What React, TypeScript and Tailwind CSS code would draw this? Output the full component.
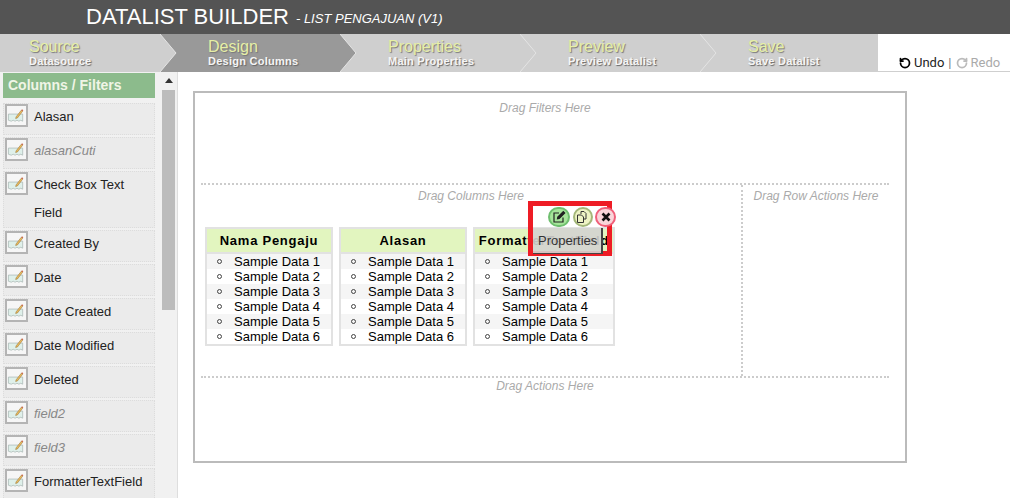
import { RotateCcw, RotateCw } from "lucide-react";

/* ---------------- Data ---------------- */

const steps = [
  { title: "Source", sub: "Datasource" },
  { title: "Design", sub: "Design Columns", active: true },
  { title: "Properties", sub: "Main Properties" },
  { title: "Preview", sub: "Preview Datalist" },
  { title: "Save", sub: "Save Datalist" },
];

const fields = [
  { label: "Alasan" },
  { label: "alasanCuti", muted: true },
  { label: "Check Box Text Field" },
  { label: "Created By" },
  { label: "Date" },
  { label: "Date Created" },
  { label: "Date Modified" },
  { label: "Deleted" },
  { label: "field2", muted: true },
  { label: "field3", muted: true },
  { label: "FormatterTextField" },
];

const samples = [1, 2, 3, 4, 5, 6];

/* ---------------- Small parts ---------------- */

function FieldIcon() {
  return (
    <span className="flex h-[23px] w-[23px] shrink-0 items-center justify-center border-2 border-[#b4b4b4] bg-[#f6f6f6]">
      <svg width="19" height="19" viewBox="0 0 20 20">
        <path d="M1.5 8.5h15v7.5l-2-1-2 1-2-1-2 1-2-1-2 1-3-1z" fill="#dff0ea" stroke="#a3b0ad" strokeWidth="0.7" />
        <path d="M9.5 11.5 15 4.5l1.4 1.1-5.4 7-1.9.6z" fill="#eab95c" stroke="#8a6a2c" strokeWidth="0.5" />
        <path d="M15 4.5l.8-1 1.4 1.1-.8 1z" fill="#c9634a" />
      </svg>
    </span>
  );
}

function StepArrow({ fill }: { fill: string }) {
  return (
    <svg className="absolute left-full top-0 z-10 h-[38px] w-[18px]" viewBox="0 0 18 38">
      <path d="M0 0 16 19 0 38z" fill={fill} />
      <path d="M0 0 16 19 0 38" fill="none" stroke="#e4e4e4" strokeWidth="1" />
    </svg>
  );
}

function SampleColumn({ title, width }: { title: string; width: string }) {
  return (
    <div className={`${width} border-2 border-[#e2e2e2] bg-white`}>
      <div className="flex h-[25px] items-center justify-center border-b-2 border-[#e2e2e2] bg-[#e2f5bf] text-[13px] font-bold tracking-[0.75px] whitespace-nowrap text-black">
        {title}
      </div>
      <ul className="text-[13px] leading-[15px] text-black">
        {samples.map((n) => (
          <li key={n} className="flex h-[15px] items-center odd:bg-[#f5f5f5]">
            <span className="ml-[10px] mr-[12px] h-[5px] w-[5px] rounded-full border border-[#444]" />
            <span>Sample Data {n}</span>
          </li>
        ))}
      </ul>
    </div>
  );
}

/* ---------------- Page ---------------- */

export default function App() {
  return (
    <div className="h-[498px] w-[1010px] overflow-hidden bg-white font-['Liberation_Sans',Arial,sans-serif]">
      {/* HEADER */}
      <header className="flex h-[34px] items-center bg-[#545454] pl-[86px] text-white">
        <span className="text-[22px] leading-none">DATALIST BUILDER</span>
        <span className="ml-[7px] pt-[3px] text-[13px] italic">- LIST PENGAJUAN (V1)</span>
      </header>

      {/* STEPS */}
      <nav className="flex h-[38px] border-b border-[#cfcfcf]">
        <div className="flex w-[878px] bg-[#cfcfcf]">
          {steps.map((s, i) => (
            <div
              key={s.title}
              className={`relative h-[38px] ${i === 0 ? "w-[160px] pl-[29px]" : "pl-[48px]"} ${i > 0 && i < 4 ? "w-[180px]" : ""} ${i === 4 ? "w-[178px]" : ""} ${s.active ? "bg-[#999999]" : ""}`}
            >
              {i < 4 && <StepArrow fill={s.active ? "#999999" : "#cfcfcf"} />}
              <div className="relative z-20 pt-[4px] text-[16px] leading-[17px] text-[#e6efa6] [text-shadow:1px_1px_1px_#777]">
                {s.title}
              </div>
              <div className="relative z-20 text-[11px] leading-[13px] font-bold tracking-[0.25px] text-[#f5f5f5] [text-shadow:1px_1px_1px_#666]">
                {s.sub}
              </div>
            </div>
          ))}
        </div>
        <div className="flex flex-1 items-end gap-[3px] pl-[21px] text-[13px] leading-[16px] font-['Roboto',sans-serif]">
          <RotateCcw size={12} strokeWidth={3.5} className="mb-[2px] text-black" />
          <span className="text-[#222]">Undo</span>
          <span className="mx-px text-[#777]">|</span>
          <RotateCw size={12} strokeWidth={3.5} className="mb-[2px] text-[#bbb]" />
          <span className="text-[#aaa]">Redo</span>
        </div>
      </nav>

      <div className="flex h-[426px]">
        {/* SIDEBAR */}
        <aside className="flex w-[178px] shrink-0 border-r border-[#dedede] bg-[#f1f1f1] pl-[3px] pt-px">
          <div className="w-[152px] shrink-0 overflow-hidden">
            <div className="mb-[5px] flex h-[25px] items-center bg-[#8cbb8c] pl-[5px] text-[14px] font-bold text-[#f0f5e6]">
              Columns / Filters
            </div>
            {fields.map((f) => (
              <div
                key={f.label}
                className={`mt-[2px] flex min-h-[32px] items-start gap-[6px] border border-dotted border-[#dcdcdc] bg-[#ebebeb] pl-px text-[13px] leading-[28px] ${f.muted ? "italic text-[#888]" : "text-[#222]"}`}
              >
                <FieldIcon />
                <span className="-mt-px w-[115px]">{f.label}</span>
              </div>
            ))}
          </div>
          <div className="ml-[7px] flex w-[13px] flex-col items-center">
            <div className="mt-[5px] h-0 w-0 border-x-[4px] border-b-[5px] border-x-transparent border-b-[#333]" />
            <div className="mt-[7px] h-[220px] w-[13px] bg-[#bcbcbc]" />
          </div>
        </aside>

        {/* CANVAS */}
        <main className="relative ml-[15px] mt-[19px] h-[372px] w-[714px] border-2 border-[#bbbbbb] bg-white px-[6px] text-[12px] italic text-[#aaa]">
          <div className="h-[92px] w-[688px] border-b-2 border-dotted border-[#cccccc] pt-[6px] text-center">Drag Filters Here</div>
          <div className="flex h-[193px] w-[688px] border-b-2 border-dotted border-[#cccccc]">
            <div className="w-[542px] border-r-2 border-dotted border-[#cccccc] pt-[2px] not-italic">
              <div className="text-center italic">Drag Columns Here</div>
              <div className="mt-[22px] ml-[4px] flex gap-[6px]">
                <SampleColumn title="Nama Pengaju" width="w-[128px]" />
                <SampleColumn title="Alasan" width="w-[128px]" />
                <SampleColumn title="FormatterTextField" width="w-[142px]" />
              </div>
            </div>
            <div className="flex-1 pt-[2px] text-center">Drag Row Actions Here</div>
          </div>
          <div className="-mt-[1px] w-[688px] text-center">Drag Actions Here</div>

          {/* Selected column overlay */}
          <div className="absolute left-[333px] top-[108px] h-[55px] w-[84px] border-[5px] border-[#ee1c25]" />
          <div className="absolute left-[338px] top-[135px] flex h-[26px] w-[70px] items-center border-r-2 border-b border-[#444] bg-[#d4d4d0]/90 pl-[5px] text-[13px] not-italic text-[#333]">
            Properties
          </div>
          <div className="absolute left-[353px] top-[114px] flex h-[20px] w-[22px] items-center justify-center rounded-full border-2 border-[#6fbf6f] bg-[#a6e59a]">
            <svg width="14" height="14" viewBox="0 0 14 14" fill="none" stroke="#222" strokeWidth="1.2">
              <path d="M11 7.5V12H2V3h5" />
              <path d="M5.5 8.8 5.8 7l5.5-5.4 1.4 1.4L7.2 8.4z" fill="#222" />
            </svg>
          </div>
          <div className="absolute left-[378px] top-[114px] flex h-[20px] w-[20px] items-center justify-center rounded-full border-2 border-[#a4b77a] bg-[#eef3c4]">
            <svg width="14" height="14" viewBox="0 0 14 14" fill="none" stroke="#333" strokeWidth="1">
              <path d="M5 4V1.5h3l2 2V9H8" />
              <path d="M1.5 5h4l2 2v5.5h-6z" />
            </svg>
          </div>
          <div className="absolute left-[400px] top-[114px] flex h-[20px] w-[21px] items-center justify-center rounded-full border-2 border-[#f0607a] bg-[#f9d5da]">
            <svg width="10" height="10" viewBox="0 0 10 10" stroke="#111" strokeWidth="2.6">
              <path d="M1.5 1.5l7 7M8.5 1.5l-7 7" />
            </svg>
          </div>
        </main>
      </div>
    </div>
  );
}
